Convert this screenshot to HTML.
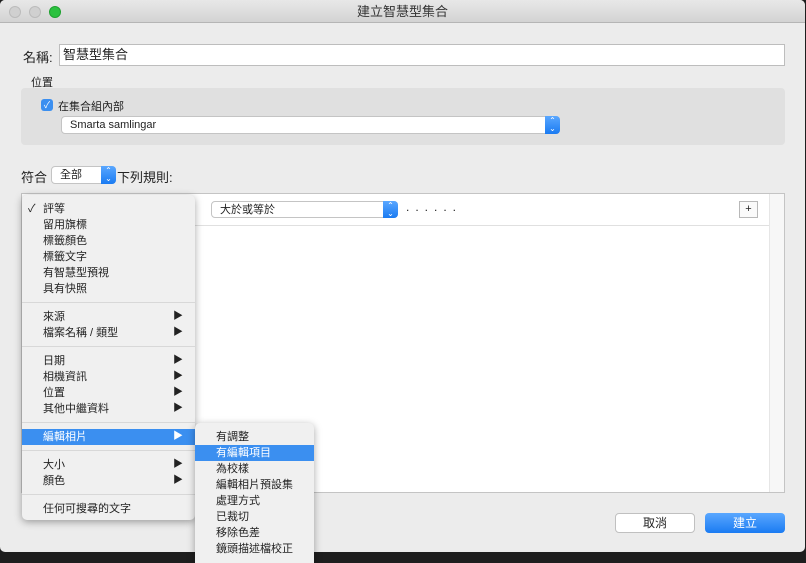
<!DOCTYPE html>
<html><head><meta charset="utf-8"><style>
*{margin:0;padding:0;box-sizing:border-box}
body{width:806px;height:558px;background:#1e1e1e;font-family:"Liberation Sans","Noto Sans CJK TC",sans-serif;position:relative;overflow:hidden;font-size:12px;color:#222}
.win{position:absolute;left:0;top:0;width:805px;height:552px;background:#ececec;border-radius:5px;overflow:hidden}
.title{position:absolute;left:0;top:0;width:100%;height:23px;background:linear-gradient(#e8e8e8,#d3d3d3);border-bottom:1px solid #b5b5b5;text-align:center;font-size:13px;line-height:23px;color:#333}
.dot{position:absolute;top:6px;width:12px;height:12px;border-radius:50%;background:#d0d0d0;border:1px solid #bbb}
.abs{position:absolute}
.field{position:absolute;background:#fff;border:1px solid #bdbdbd}
.pop{position:absolute;background:#fff;border:1px solid #c4c4c4;border-radius:4px;font-size:11px;padding-left:8px;line-height:16px}
.arr{position:absolute;right:-1px;top:-1px;bottom:-1px;width:15px;background:linear-gradient(#5aa7ff,#1a7bf2);border-radius:0 4px 4px 0;color:#fff;font-size:8px;text-align:center;line-height:8px;padding-top:1px}
.menu{position:absolute;background:#f0f0f0;border-radius:5px;box-shadow:0 2px 8px rgba(0,0,0,.35);font-size:11px}
.it{height:16px;line-height:16px;padding-left:21px;position:relative}
.it .tri{position:absolute;right:12px;top:0;font-size:10px}
.sep{height:1px;background:#d8d8d8;margin:5px 0 6px}
.hl{background:#3b8ff0;color:#fff}
</style></head><body>
<div class="win">
<div class="title">建立智慧型集合</div>
<div class="dot" style="left:9px"></div><div class="dot" style="left:29px"></div><div class="dot" style="left:49px;background:#2bc13f;border-color:#1ea12f"></div>
<div class="abs" style="left:23px;top:47px;font-size:13px">名稱:</div>
<div class="field" style="left:59px;top:44px;width:726px;height:22px;font-size:13px;padding-left:3px;line-height:20px">智慧型集合</div>
<div class="abs" style="left:31px;top:74px;font-size:11px">位置</div>
<div class="abs" style="left:21px;top:88px;width:764px;height:57px;background:#e0e0e0;border-radius:4px"></div>
<div class="abs" style="left:41px;top:99px;width:12px;height:12px;background:#3b8ff0;border-radius:3px;color:#fff;font-size:9px;line-height:12px;text-align:center">✓</div>
<div class="abs" style="left:58px;top:98px;font-size:11px">在集合組內部</div>
<div class="pop" style="left:61px;top:116px;width:499px;height:18px">Smarta samlingar<div class="arr">⌃<br>⌄</div></div>
<div class="abs" style="left:21px;top:167px;font-size:13px">符合</div>
<div class="pop" style="left:51px;top:166px;width:65px;height:18px">全部<div class="arr">⌃<br>⌄</div></div>
<div class="abs" style="left:117px;top:167px;font-size:13px">下列規則:</div>
<div class="abs" style="left:21px;top:193px;width:764px;height:300px;background:#fff;border:1px solid #c4c4c4"></div>
<div class="abs" style="left:769px;top:194px;width:15px;height:298px;background:#f7f7f7;border-left:1px solid #e6e6e6"></div>
<div class="abs" style="left:22px;top:225px;width:747px;height:1px;background:#e0e0e0"></div>
<div class="pop" style="left:211px;top:201px;width:187px;height:17px;font-size:11px">大於或等於<div class="arr">⌃<br>⌄</div></div>
<div class="abs" style="left:406px;top:200px;font-size:12px;letter-spacing:6px">......</div>
<div class="abs" style="left:739px;top:201px;width:19px;height:17px;border:1px solid #b8b8b8;background:#fafafa;text-align:center;line-height:15px;font-size:11px">+</div>
<div class="abs" style="left:615px;top:513px;width:80px;height:20px;background:#fff;border:1px solid #c0c0c0;border-radius:4px;text-align:center;line-height:18px;font-size:12px">取消</div>
<div class="abs" style="left:705px;top:513px;width:80px;height:20px;background:linear-gradient(#5aa7ff,#1a7bf2);border-radius:4px;text-align:center;line-height:20px;color:#fff;font-size:12px">建立</div>
</div>
<div class="menu" style="left:22px;top:195px;width:173px;height:325px;padding-top:6px">
<div class="it"><span class="abs" style="left:6px">✓</span>評等</div>
<div class="it">留用旗標</div><div class="it">標籤顏色</div><div class="it">標籤文字</div><div class="it">有智慧型預視</div><div class="it">具有快照</div>
<div class="sep"></div>
<div class="it">來源<span class="tri">▶</span></div><div class="it">檔案名稱 / 類型<span class="tri">▶</span></div>
<div class="sep"></div>
<div class="it">日期<span class="tri">▶</span></div><div class="it">相機資訊<span class="tri">▶</span></div><div class="it">位置<span class="tri">▶</span></div><div class="it">其他中繼資料<span class="tri">▶</span></div>
<div class="sep"></div>
<div class="it hl">編輯相片<span class="tri">▶</span></div>
<div class="sep"></div>
<div class="it">大小<span class="tri">▶</span></div><div class="it">顏色<span class="tri">▶</span></div>
<div class="sep"></div>
<div class="it">任何可搜尋的文字</div>
</div>
<div class="menu" style="left:195px;top:423px;width:119px;height:140px;padding-top:6px;border-radius:5px 5px 0 0">
<div class="it">有調整</div><div class="it hl">有編輯項目</div><div class="it">為校樣</div><div class="it">編輯相片預設集</div><div class="it">處理方式</div><div class="it">已裁切</div><div class="it">移除色差</div><div class="it">鏡頭描述檔校正</div>
</div>
</body></html>
